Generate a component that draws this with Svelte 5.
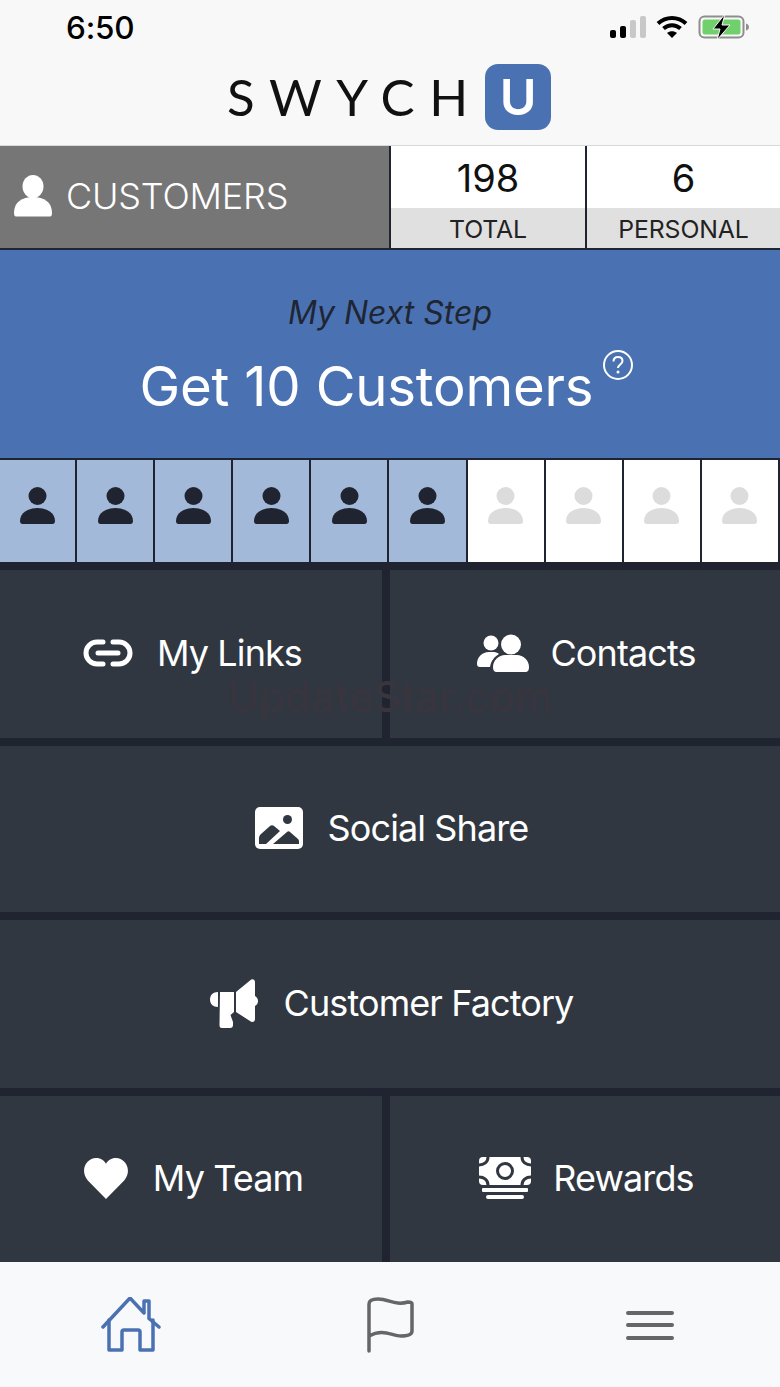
<script>
  const cells = Array.from({ length: 10 }, (_, i) => i < 6);
</script>

<div class="page">
  <header class="top">
    <div class="status">
      <span class="time">6:50</span>
      <div class="status-icons">
        <svg width="36" height="24" viewBox="0 0 36 24">
          <rect x="0" y="15" width="6" height="8" rx="2" fill="#000"/>
          <rect x="10" y="11" width="6" height="12" rx="2" fill="#000"/>
          <rect x="20" y="5" width="6" height="18" rx="2" fill="#c8c8c8"/>
          <rect x="30" y="1" width="6" height="22" rx="2" fill="#c8c8c8"/>
        </svg>
        <svg width="32" height="24" viewBox="0 0 32 24">
          <path d="M2 8.500C10 1 22 1 30 8.500" fill="none" stroke="#000" stroke-width="4"/>
          <path d="M7.500 13.500C12.500 9 19.500 9 24.500 13.500" fill="none" stroke="#000" stroke-width="4"/>
          <path d="M16 23l-5-5c3-2.500 7-2.500 10 0z" fill="#000"/>
        </svg>
        <svg width="52" height="26" viewBox="0 0 52 26">
          <rect x="1.500" y="2.500" width="44" height="21" rx="5" fill="none" stroke="#8e8e8e" stroke-width="2"/>
          <rect x="4.500" y="5.500" width="38" height="15" rx="2.500" fill="#6fd06c"/>
          <path d="M48 9.500c2 .5 3 2 3 3.500s-1 3-3 3.500z" fill="#8e8e8e"/>
          <path d="M27 0L15 15h7l-3 11 13-15h-8z" fill="#000" stroke="#f8f8f8" stroke-width="1"/>
        </svg>
      </div>
    </div>
    <div class="logo">
      <span class="logo-word">SWYCH</span>
      <span class="logo-u">U</span>
    </div>
  </header>

  <section class="stats">
    <div class="stat-title">
      <svg width="38" height="42" viewBox="0 0 38 42">
        <ellipse cx="19" cy="11.500" rx="10.500" ry="11.500" fill="#fff"/>
        <path d="M0 38c0-11 8-16 19-16s19 5 19 16c0 3-1 3.500-3 3.500H3c-2 0-3-.5-3-3.500z" fill="#fff"/>
      </svg>
      <span>CUSTOMERS</span>
    </div>
    <div class="stat">
      <div class="stat-value">198</div>
      <div class="stat-label">TOTAL</div>
    </div>
    <div class="stat">
      <div class="stat-value">6</div>
      <div class="stat-label">PERSONAL</div>
    </div>
  </section>

  <section class="hero">
    <div class="hero-sub">My Next Step</div>
    <div class="hero-title">
      <span>Get 10 Customers</span>
      <svg class="help" width="32" height="32" viewBox="0 0 32 32">
        <circle cx="16" cy="16" r="14" fill="none" stroke="#fff" stroke-width="2"/>
        <path d="M11.500 12.500c0-3 2-4.500 4.500-4.500s4.500 1.500 4.500 4c0 3.500-4.500 3.500-4.500 7" fill="none" stroke="#fff" stroke-width="2"/>
        <circle cx="16" cy="23" r="1.500" fill="#fff"/>
      </svg>
    </div>
  </section>

  <section class="cells">
    {#each cells as on}
      <div class="cell" class:on>
        <svg width="35" height="37" viewBox="0 0 35 37">
          <circle cx="17.500" cy="9" r="9" fill={on ? '#1f2430' : '#dcdcdc'}/>
          <path d="M0 34c0-8 8-13 17.500-13S35 26 35 34c0 2-1 3-2.500 3h-30C1 37 0 36 0 34z" fill={on ? '#1f2430' : '#dcdcdc'}/>
        </svg>
      </div>
    {/each}
  </section>

  <nav class="tiles">
    <a class="tile half">
      <svg width="50" height="30" viewBox="0 0 50 30">
        <path d="M20 4H14a11 11 0 0 0 0 22h6M30 4h6a11 11 0 0 1 0 22h-6M15 15h20" fill="none" stroke="#fff" stroke-width="5" stroke-linecap="round"/>
      </svg>
      <span class="gap-24">My Links</span>
    </a>
    <a class="tile half">
      <svg width="52" height="38" viewBox="0 0 52 38">
        <circle cx="14" cy="9" r="7.500" fill="#fff"/>
        <path d="M0 30c0-7 5-12 12-12h5c2 0 4 1 5 2-5 3-8 7-9 13H3c-2 0-3-1-3-3z" fill="#fff"/>
        <circle cx="34" cy="10.500" r="10" fill="#fff"/>
        <path d="M16 33c0-7 6-12 12-12h12c6 0 12 5 12 12 0 3-1 5-4 5H20c-3 0-4-2-4-5z" fill="#fff"/>
      </svg>
      <span class="gap-21">Contacts</span>
    </a>
    <a class="tile full">
      <svg width="48" height="42" viewBox="0 0 48 42">
        <rect width="48" height="42" rx="5" fill="#fff"/>
        <circle cx="32.500" cy="12.500" r="4.500" fill="#313741"/>
        <path d="M4 37v-6c0-2 1-3 2-4l9-8c1-1 3-1 4 0l6 5-14 13z" fill="#313741"/>
        <path d="M18 37l14-12c1-1 2-1 3 0l8 7c1 1 1 2 1 3v2z" fill="#313741"/>
      </svg>
      <span class="gap-25">Social Share</span>
    </a>
    <a class="tile full">
      <svg width="49" height="49" viewBox="0 0 49 49">
        <path d="M8 13c-5 0-8 3-8 7.500S3 28 8 28z" fill="#fff"/>
        <path d="M10 13h14v20l-3.500 3 2.500 7v3c0 2-1 3-3 3h-8c-2 0-2.500-1-2.500-3z" fill="#fff"/>
        <path d="M26 13L40 1.500c2-2 5-1.500 5 2V17c2 1 3 3 3 5s-1 4-3 5v13c0 3-3 4-5 2L26 33z" fill="#fff"/>
      </svg>
      <span class="gap-25">Customer Factory</span>
    </a>
    <a class="tile half team">
      <svg width="44" height="41" viewBox="0 0 46 42" preserveAspectRatio="none">
        <path d="M23 42L4 23C-5 12 3 0 12.500 0 18 0 21 2.500 23 6c2-3.500 5-6 10.500-6C43 0 51 12 42 23z" fill="#fff"/>
      </svg>
      <span class="gap-25">My Team</span>
    </a>
    <a class="tile half">
      <svg width="52" height="42" viewBox="0 0 52 42">
        <rect x="0" y="0" width="52" height="28" rx="4" fill="#fff"/>
        <circle cx="26" cy="14" r="7.500" fill="none" stroke="#313741" stroke-width="3"/>
        <path d="M9 0c0 5-4 8-9 8M43 0c0 5 4 8 9 8M9 28c0-5-4-8-9-8M43 28c0-5 4-8 9-8" fill="none" stroke="#313741" stroke-width="3"/>
        <rect x="3" y="31" width="46" height="4" rx="1" fill="#fff"/>
        <rect x="7" y="38" width="38" height="4" rx="2" fill="#fff"/>
      </svg>
      <span class="gap-22">Rewards</span>
    </a>
  </nav>

  <footer class="tabs">
    <div class="tab">
      <svg width="60" height="56" viewBox="0 0 60 56" fill="none" stroke="#4a72b2" stroke-width="3.500" stroke-linecap="round" stroke-linejoin="round">
        <path d="M2 30L29 1l14 15M43 16V4h5v17.500M48 21.500l10 8.500"/>
        <path d="M8 23v30h13V35c0-1.500 1-2 2-2h14c1 0 2 .5 2 2v18h13V23"/>
      </svg>
    </div>
    <div class="tab">
      <svg width="50" height="56" viewBox="0 0 50 56" fill="none" stroke="#666" stroke-width="3.500" stroke-linecap="round" stroke-linejoin="round">
        <path d="M3 54V7c0-3 3-5 9-5 11 0 17 7 30 3 2 0 4 0 4 2v27c0 3-4 5-11 5-9 0-18-8-32 0"/>
      </svg>
    </div>
    <div class="tab">
      <svg width="48" height="32" viewBox="0 0 48 32" fill="none" stroke="#666" stroke-width="4" stroke-linecap="round">
        <path d="M2 4h44M2 16h44M2 29h44"/>
      </svg>
    </div>
  </footer>

  <div class="watermark">UpdateStar.com</div>
</div>

<style>
  :global(body) {
    margin: 0;
    background: #f8f8f8;
  }

  .page {
    position: relative;
    width: 780px;
    height: 1387px;
    display: flex;
    flex-direction: column;
    overflow: hidden;
    font-family: Inter, "Liberation Sans", sans-serif;
    background: #f8f8f8;
  }

  .top {
    height: 145px;
    padding: 0 30px 0 66px;
    box-sizing: border-box;
  }

  .status {
    height: 50px;
    display: flex;
    align-items: center;
    justify-content: space-between;
    padding-top: 4px;
    box-sizing: border-box;
  }

  .time {
    font-size: 31.500px;
    font-weight: 500;
    letter-spacing: -0.2px;
    color: #000;
  }

  .status-icons {
    display: flex;
    align-items: center;
    gap: 10px;
  }

  .logo {
    display: flex;
    justify-content: center;
    align-items: center;
    margin: 14px 0 0 -38px;
    gap: 17px;
  }

  .logo-word {
    font-family: Lato, sans-serif;
    font-weight: 400;
    font-size: 51px;
    letter-spacing: 14.500px;
    color: #111;
    margin-right: -14.500px;
    line-height: 66px;
  }

  .logo-u {
    width: 66px;
    height: 66px;
    border-radius: 13px;
    background: #4a72b2;
    color: #fff;
    font-size: 50px;
    font-weight: 600;
    display: flex;
    align-items: center;
    justify-content: center;
  }

  .stats {
    height: 105px;
    display: grid;
    grid-template-columns: 391px 196px 1fr;
    background: #fff;
    border-top: 1px solid #d8d8d8;
    border-bottom: 2px solid #1f2633;
    box-sizing: border-box;
  }

  .stat-title {
    background: #767676;
    border-right: 2px solid #1f2430;
    display: flex;
    align-items: center;
    gap: 14px;
    padding: 0 0 3px 14px;
    color: #fff;
    font-size: 36px;
    font-weight: 300;
    letter-spacing: -0.2px;
  }

  .stat {
    display: flex;
    flex-direction: column;
    border-right: 2px solid #1f2430;
    text-align: center;
    color: #111;
  }

  .stat:last-child {
    border-right: 0;
  }

  .stat-value {
    height: 62px;
    display: flex;
    align-items: center;
    justify-content: center;
    font-size: 38px;
    padding-top: 1px;
    box-sizing: border-box;
  }

  .stat-label {
    flex: 1;
    background: #e0e0e0;
    display: flex;
    align-items: center;
    justify-content: center;
    font-size: 24.800px;
    color: #222;
    letter-spacing: -0.1px;
    padding-top: 2px;
  }

  .hero {
    height: 208px;
    background: #4a72b2;
    text-align: center;
  }

  .hero-sub {
    font-style: italic;
    font-size: 32px;
    color: #1f2633;
    padding-top: 45px;
    line-height: 36px;
  }

  .hero-title {
    display: flex;
    justify-content: center;
    align-items: flex-start;
    margin-top: 21px;
    gap: 9px;
    color: #fff;
    font-size: 54.500px;
    line-height: 68px;
    letter-spacing: -0.2px;
    padding-right: 6px;
  }

  .help {
    margin-top: -3px;
  }

  .cells {
    height: 112px;
    display: grid;
    grid-template-columns: repeat(10, 1fr);
    gap: 2px;
    background: #1f2430;
    margin-left: -1px;
    padding: 2px 2px 8px 0;
    box-sizing: border-box;
  }

  .cell {
    background: #fff;
    display: flex;
    align-items: center;
    justify-content: center;
    padding-bottom: 12px;
  }

  .cell.on {
    background: #a3b9da;
  }

  .tiles {
    height: 692px;
    display: grid;
    grid-template-columns: 382px 1fr;
    grid-template-rows: 168px 166px 168px 166px;
    gap: 8px;
    background: #1f2430;
  }

  .tile {
    background: #313741;
    color: #fff;
    display: flex;
    align-items: center;
    justify-content: center;
    font-size: 36px;
    letter-spacing: -0.9px;
    padding: 0 0 2px 3px;
  }

  .tile.team {
    padding-left: 5px;
  }

  .tile.full {
    grid-column: 1 / -1;
  }

  .gap-21 { margin-left: 21px; }
  .gap-22 { margin-left: 22px; }
  .gap-24 { margin-left: 24px; }
  .gap-25 { margin-left: 25px; }

  .tabs {
    height: 125px;
    background: #f8f9fa;
    display: grid;
    grid-template-columns: 262px 258px 1fr;
    flex: none;
  }

  .tab {
    display: flex;
    align-items: center;
    justify-content: center;
    padding-top: 1px;
  }

  .watermark {
    position: absolute;
    left: 228px;
    top: 671px;
    font-size: 42px;
    font-weight: 500;
    line-height: 52px;
    color: #38353e;
    pointer-events: none;
  }
</style>
